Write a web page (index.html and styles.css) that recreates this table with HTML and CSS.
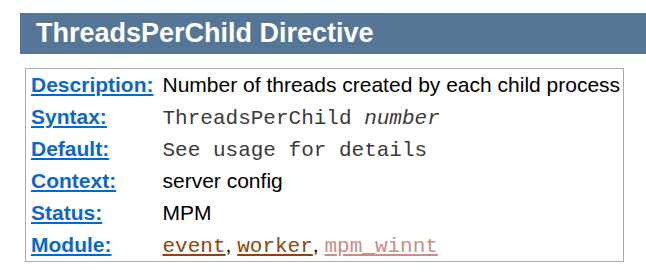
FILE: index.html
```html
<!DOCTYPE html>
<html>
<head>
<meta charset="utf-8">
<link rel="stylesheet" href="styles.css">
</head>
<body>
<div class="directive-section">
  <h2 class="directive-title">ThreadsPerChild Directive</h2>
  <table class="directive">
    <tr><th><a href="#">Description:</a></th><td>Number of threads created by each child process</td></tr>
    <tr><th><a href="#">Syntax:</a></th><td><code>ThreadsPerChild <em>number</em></code></td></tr>
    <tr><th><a href="#">Default:</a></th><td><code>See usage for details</code></td></tr>
    <tr><th><a href="#">Context:</a></th><td>server config</td></tr>
    <tr><th><a href="#">Status:</a></th><td>MPM</td></tr>
    <tr><th><a href="#">Module:</a></th><td><code><a class="module" href="#">event</a></code>, <code><a class="module" href="#">worker</a></code>, <code><a class="module visited" href="#">mpm_winnt</a></code></td></tr>
  </table>
</div>
</body>
</html>
```

FILE: styles.css
```css
html, body {
  margin: 0;
  padding: 0;
  background: #ffffff;
}
body {
  font-family: "Liberation Sans", Arial, sans-serif;
  color: #000;
}
.directive-section {
  padding: 13px 0 0 20px;
}
.directive-title {
  margin: 0;
  background: #557697;
  color: #ffffff;
  font-size: 27px;
  font-weight: bold;
  line-height: 41px;
  padding-left: 16px;
}
.directive {
  margin: 14px 0 0 5px;
  width: 599px;
  border: 1px solid #aaaaaa;
  border-collapse: separate;
  border-spacing: 0;
  font-size: 21px;
  line-height: 24px;
}
.directive th,
.directive td {
  height: 24px;
  vertical-align: top;
  white-space: nowrap;
}
.directive th {
  text-align: left;
  font-weight: bold;
  padding: 4px 4px 4px 5px;
}
.directive td {
  padding: 4px 3px 4px 5px;
}
.directive th a {
  color: #0b68c4;
  text-decoration: underline;
}
code {
  font-family: "Liberation Mono", "Courier New", monospace;
  font-size: 21px;
  line-height: 1;
  color: #3a3a3a;
}
a.module {
  color: #8b4513;
}
a.module.visited {
  color: #c59088;
}
```
